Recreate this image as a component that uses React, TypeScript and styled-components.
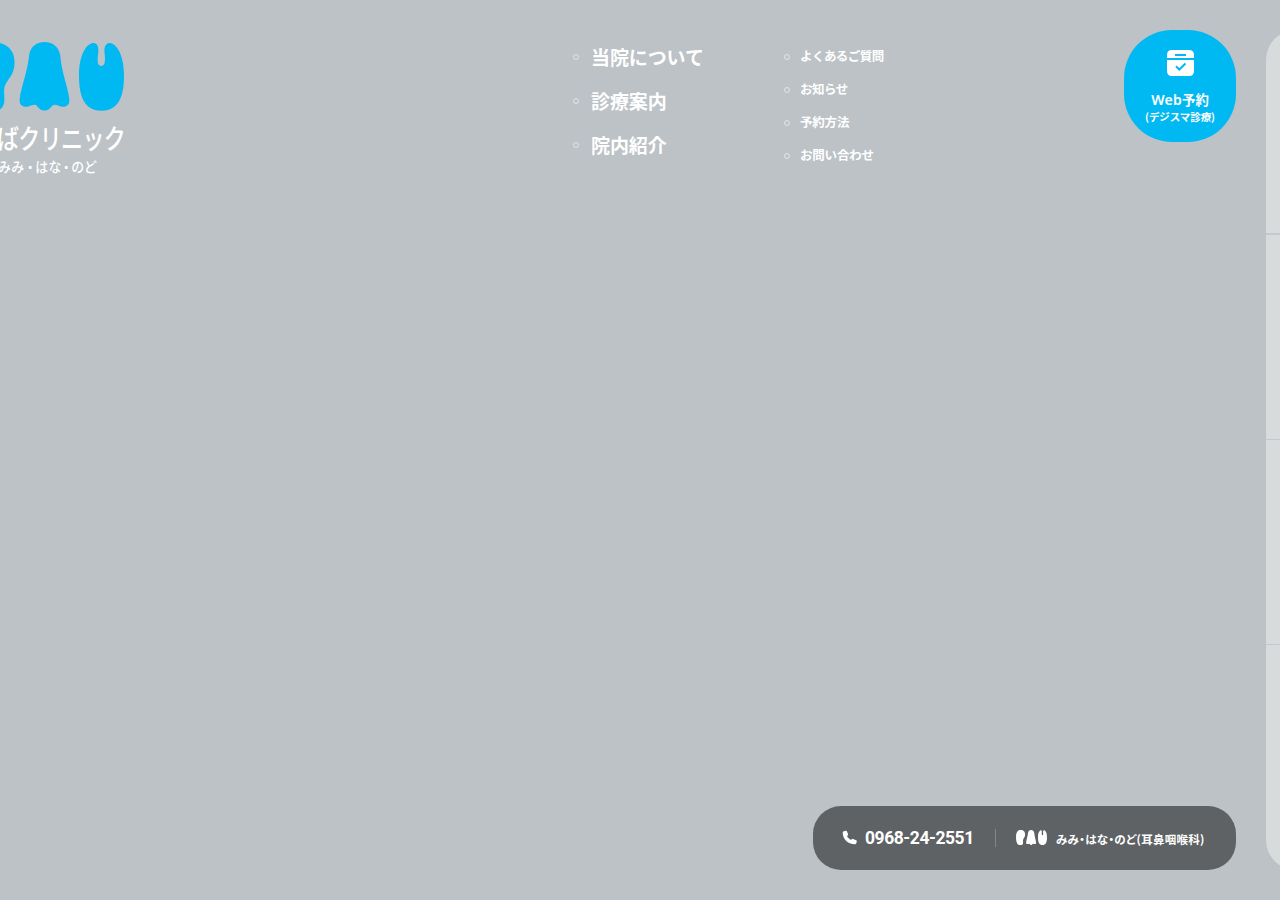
import React from "react";
import styled, { createGlobalStyle } from "styled-components";

const Global = createGlobalStyle`
  *, *::before { box-sizing: border-box; }
  body { margin: 0; overflow: hidden; background: #bcc2c6; }
  a { color: inherit; text-decoration: none; }
`;

const Page = styled.div`
  display: flex;
  width: 1280px;
  height: 900px;
  overflow: hidden;
  padding: 30px 0;
  background: #bcc2c6;
  color: #fff;
  font-family: "Noto Sans CJK JP", sans-serif;
`;

const Main = styled.div`
  display: flex;
  flex-direction: column;
  justify-content: space-between;
  width: 1236px;
  flex: none;
`;

const Header = styled.header`
  display: flex;
  align-items: flex-start;
`;

const Logo = styled.svg`
  display: block;
  flex: none;
  width: 140px;
  height: 150px;
`;

const Nav = styled.nav`
  display: flex;
  margin-left: 433px;
`;

const List = styled.ul<{ $small?: boolean }>`
  list-style: none;
  margin: 0;
  padding: ${(p) => (p.$small ? "10px" : "5px")} 0 0;
  width: ${(p) => (p.$small ? "340px" : "211px")};
`;

const Item = styled.li<{ $small?: boolean }>`
  display: flex;
  align-items: center;
  gap: ${(p) => (p.$small ? "10px" : "12px")};
  height: ${(p) => (p.$small ? "33px" : "44px")};
  font-size: ${(p) => (p.$small ? "12.5px" : "19px")};
  font-weight: 700;
  white-space: nowrap;
  &::before {
    content: "";
    width: 6px;
    height: 6px;
    flex: none;
    border: 1px solid rgba(255, 255, 255, 0.55);
    border-radius: 50%;
  }
`;

const NavLink = styled.a<{ $track: number; $main?: boolean }>`
  letter-spacing: ${(p) => p.$track}px;
  line-height: 1;
  padding-bottom: ${(p) => (p.$main ? "2px" : "0")};
`;

const Reserve = styled.a`
  display: flex;
  flex-direction: column;
  align-items: center;
  width: 112px;
  height: 112px;
  margin-left: auto;
  padding-top: 20px;
  border-radius: 48px;
  background: #00b9f2;
  font-weight: 700;
  white-space: nowrap;
`;

const ReserveTitle = styled.span`
  margin-top: 15px;
  font-size: 13.4px;
  line-height: 16px;
`;

const Latin = styled.span`
  font-family: "Noto Sans", sans-serif;
  font-weight: 600;
  font-size: 14px;
  letter-spacing: 0.3px;
`;

const ReserveNote = styled.span`
  margin-top: 2px;
  font-size: 10.5px;
  line-height: 14px;
  letter-spacing: -0.1px;
`;

const Contact = styled.div`
  display: flex;
  align-items: center;
  align-self: flex-end;
  width: 423px;
  height: 64px;
  padding-left: 29px;
  border-radius: 28px;
  background: #5e6264;
  white-space: nowrap;
`;

const Phone = styled.a`
  display: flex;
  align-items: center;
  gap: 7px;
  width: 153px;
  font: 700 17.5px/20px Roboto, sans-serif;
  letter-spacing: -0.45px;
`;

const PhoneIcon = styled.svg`
  flex: none;
  margin-bottom: 1px;
`;

const Department = styled.div`
  display: flex;
  align-items: center;
  gap: 9px;
  height: 18px;
  padding-left: 20px;
  border-left: 1px solid #83878a;
  font-size: 11.5px;
  font-weight: 700;
`;

const SmallLogo = styled.svg`
  flex: none;
  margin-bottom: 2px;
`;

const DepartmentName = styled.span`
  padding-top: 1px;
  font-feature-settings: "palt";
  letter-spacing: 0.28px;
`;

const SidePanel = styled.aside`
  display: grid;
  grid-template-rows: 205px 205px 205px 225px;
  flex: none;
  width: 120px;
  height: 840px;
  margin-left: 30px;
  overflow: hidden;
  border-radius: 30px;
  background: #d7dbdc;
`;

const SideCell = styled.div`
  border-bottom: 1px solid #c5c9cb;
  &:first-child { border-bottom-width: 2px; }
  &:last-child { border-bottom: 0; }
`;

const mainLinks = [
  { label: "当院について", track: -0.1 },
  { label: "診療案内", track: -0.1 },
  { label: "院内紹介", track: -0.1 },
];

const subLinks = [
  { label: "よくあるご質問", track: -0.55 },
  { label: "お知らせ", track: -0.5 },
  { label: "予約方法", track: -0.2 },
  { label: "お問い合わせ", track: -0.2 },
];

const LetterShapes = () => (
  <>
    <path d="M-9 12C9 12 15 22 14.500 34C14 46 7 49 4.500 57C3 64 6 70 3 76C0 82-6 81-12 81C-24 81-31 68-31 46C-31 24-23 12-9 12Z" />
    <path d="M44.500 12C53 12 59 17 60.300 26C61.500 42 68 57 69.300 69C70 76 65 77.500 61 76.500C57 75.500 54.500 73.500 52 76C50 78.500 48 80.600 44.500 80.600C41 80.600 39 78.500 37 76C35 73.500 32 75.500 28 76.500C24 77.500 19 76 19.700 69C21 57 27.500 42 29 26C30.200 17 36 12 44.500 12Z" />
    <path d="M93.500 13C97.500 13 98.800 17.500 98.300 22C98 26 96 36 101.300 36C106.500 36 104.800 26 104.500 22C104.200 17.500 105.500 13 109.500 13C115 13 124 22 124 46C124 69 117 80.700 101.500 80.700C86 80.700 79 69 79 46C79 22 88 13 93.500 13Z" />
  </>
);

export default function App() {
  return (
    <>
      <Global />
      <Page>
        <Main>
          <Header>
            <Logo viewBox="0 0 140 150" fill="#fff">
              <g fill="#00b9f2">
                <LetterShapes />
              </g>
              <g fontFamily="Noto Sans CJK JP" fontWeight="500">
                <text transform="translate(-3 118.500) scale(.8 1)" fontSize="27.5" textLength="161" lengthAdjust="spacing">ばクリニック</text>
                <text transform="translate(-2 141.500) scale(.92 1)" fontSize="14" x="0 14.500 28 40.500 55 67 79.500 93.500">みみ・はな・のど</text>
              </g>
            </Logo>
            <Nav>
              <List>
                {mainLinks.map((l) => (
                  <Item key={l.label}>
                    <NavLink href="#" $main $track={l.track}>{l.label}</NavLink>
                  </Item>
                ))}
              </List>
              <List $small>
                {subLinks.map((l) => (
                  <Item key={l.label} $small>
                    <NavLink href="#" $track={l.track}>{l.label}</NavLink>
                  </Item>
                ))}
              </List>
            </Nav>
            <Reserve href="#">
              <svg width="27" height="26" viewBox="0 0 27 26">
                <path fill="#fff" d="M5 0H22Q27 0 27 5V8H0V5Q0 0 5 0Z M0 10H27V21Q27 26 22 26H5Q0 26 0 21Z" />
                <path d="M8 5H19" stroke="#00b9f2" strokeWidth="2" />
                <path d="M9 16.300L12.300 19.500L18.500 13.500" fill="none" stroke="#00b9f2" strokeWidth="2" />
              </svg>
              <ReserveTitle><Latin>Web</Latin>予約</ReserveTitle>
              <ReserveNote>(デジスマ診療)</ReserveNote>
            </Reserve>
          </Header>
          <Contact>
            <Phone href="#">
              <PhoneIcon width="16" height="16" viewBox="0 0 16 16" fill="#fff">
                <path d="M1.300 1.500L3.600.7Q4.500.4 4.900 1.300L6 4Q6.300 4.800 5.700 5.400L4.900 6.100Q6.200 8.700 8.900 10.100L9.700 9.200Q10.300 8.600 11.100 9L14.200 10.300Q15 10.700 14.800 11.500L14.200 13.500Q13.900 14.300 13 14.300C5.500 14.300 .7 9 .7 2.500Q.7 1.800 1.300 1.500Z" />
              </PhoneIcon>
              0968-24-2551
            </Phone>
            <Department>
              <SmallLogo width="31" height="15" viewBox="-31 12 155 69" preserveAspectRatio="none" fill="#fff">
                <LetterShapes />
              </SmallLogo>
              <DepartmentName>みみ・はな・のど(耳鼻咽喉科)</DepartmentName>
            </Department>
          </Contact>
        </Main>
        <SidePanel>
          <SideCell />
          <SideCell />
          <SideCell />
          <SideCell />
        </SidePanel>
      </Page>
    </>
  );
}
